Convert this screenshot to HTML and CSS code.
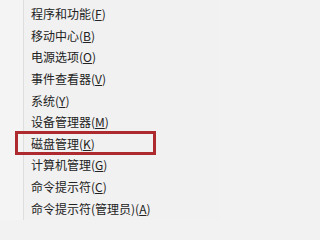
FILE: index.html
```html
<!DOCTYPE html>
<html lang="zh-CN">
<head>
<meta charset="utf-8">
<link rel="stylesheet" href="styles.css">
</head>
<body>
<div class="menu">
  <ul class="items">
    <li class="item">程序和功能(<u>F</u>)</li>
    <li class="item">移动中心(<u>B</u>)</li>
    <li class="item">电源选项(<u>O</u>)</li>
    <li class="item">事件查看器(<u>V</u>)</li>
    <li class="item">系统(<u>Y</u>)</li>
    <li class="item">设备管理器(<u>M</u>)</li>
    <li class="item highlight">磁盘管理(<u>K</u>)</li>
    <li class="item">计算机管理(<u>G</u>)</li>
    <li class="item">命令提示符(<u>C</u>)</li>
    <li class="item">命令提示符(管理员)(<u>A</u>)</li>
  </ul>
</div>
</body>
</html>
```
FILE: styles.css
```css
html, body {
  margin: 0;
  padding: 0;
  background: #f2f2f2;
}
.menu {
  width: 219px;
  height: 220px;
  padding-left: 23px;
  box-sizing: border-box;
  background: #f4f4f4;
  overflow: hidden;
}
.items {
  list-style: none;
  margin: 0;
  padding: 3px 0 0 7px;
  border-left: 1px solid #dedede;
  background: #f1f1f1;
  height: 100%;
  box-sizing: border-box;
}
.item {
  position: relative;
  height: 21.65px;
  line-height: 21.65px;
  font-family: "Noto Sans CJK SC", "Noto Sans", sans-serif;
  font-size: 12px;
  color: #222;
  white-space: nowrap;
}
.item u {
  text-decoration: underline;
  text-underline-offset: 1px;
}
.highlight::after {
  content: "";
  position: absolute;
  left: -16px;
  width: 135px;
  top: -2px;
  height: 18px;
  border: 3px solid #ad2a2e;
}
```
